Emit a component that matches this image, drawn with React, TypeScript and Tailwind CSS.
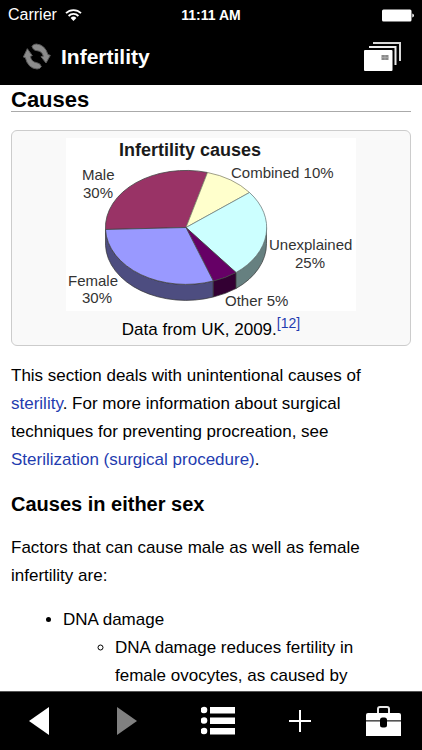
import { useState } from "react";

const RefreshIcon = () => (
    <svg width="28" height="28" viewBox="0 0 84 84" aria-hidden="true">
        <g fill="#8c8c8c" stroke="#5c5c5c" strokeWidth="3" strokeLinejoin="round">
            <path d="M27 10 Q31 3 40 3 Q66 5 75 35 L82 37 L69 60 L54 41 L61 40 Q57 24 42 23 Q31 23 27 10 Z" />
            <path d="M55 71 Q51 78 42 78 Q15 76 7 44 L1 42 L13 17 L28 38 L22 40 Q25 57 41 59 Q52 60 55 71 Z" />
        </g>
    </svg>
)

const CardsIcon = () => (
    <svg width="37" height="29" viewBox="0 0 37 29" aria-hidden="true">
        <path d="M9 1 H36 V19" fill="none" stroke="#d8d8d8" strokeWidth="2" />
        <path d="M5 5 H31.500 V23" fill="none" stroke="#ececec" strokeWidth="2" />
        <rect x="0" y="8" width="28.500" height="21" rx="1" fill="#fff" />
        <rect x="17.500" y="13" width="7" height="5" fill="#8a8a8a" />
        <path d="M17.500 15.500 H24.500 M21 13 V18" stroke="#b5b5b5" strokeWidth="0.600" />
    </svg>
)

const WifiIcon = () => (
    <svg width="17" height="12" viewBox="0 0 17 12" aria-hidden="true">
        <g fill="none" stroke="#fff" strokeWidth="1.800">
            <path d="M1 4.200 A10.600 10.600 0 0 1 16 4.200" />
            <path d="M3.600 7 A6.900 6.900 0 0 1 13.400 7" />
        </g>
        <path d="M8.500 12 L5.600 9 A4.100 4.100 0 0 1 11.400 9 Z" fill="#fff" />
    </svg>
)

const BatteryIcon = () => (
    <svg width="32" height="13" viewBox="0 0 32 13" aria-hidden="true">
        <rect x="0" y="0.500" width="29.500" height="12" rx="1.500" fill="#fff" />
        <path d="M30.300 4.600 Q32 5 32 6.500 Q32 8 30.300 8.400 Z" fill="#fff" />
    </svg>
)

const ListIcon = () => (
    <svg width="34" height="30" viewBox="0 0 34 30" fill="#fff" aria-hidden="true">
        <circle cx="3" cy="4" r="3.300" />
        <circle cx="3" cy="14.500" r="3.300" />
        <circle cx="3" cy="25" r="3.300" />
        <rect x="9" y="1" width="25" height="6.500" />
        <rect x="9" y="11.500" width="25" height="6.500" />
        <rect x="9" y="22" width="25" height="6.500" />
    </svg>
)

const PlusIcon = () => (
    <svg width="24" height="24" viewBox="0 0 24 24" aria-hidden="true">
        <path d="M12 1 V23 M1 12 H23" stroke="#fff" strokeWidth="2" />
    </svg>
)

const BriefcaseIcon = () => (
    <svg width="35" height="30" viewBox="0 0 35 30" aria-hidden="true">
        <path d="M12 7 V3 Q12 1 14 1 H21 Q23 1 23 3 V7" fill="none" stroke="#e8e8e8" strokeWidth="2" />
        <path d="M0 14 V9 Q0 7 2 7 H33 Q35 7 35 9 V14 Z" fill="#fff" />
        <rect x="0" y="14" width="35" height="1.500" fill="#555" />
        <rect x="0" y="15.500" width="35" height="14.500" fill="#fff" />
        <rect x="14" y="11.500" width="7" height="10" rx="2.500" fill="#000" />
    </svg>
)

const Triangle = ({ points, color }: { points: string, color: string }) => (
    <svg width="20" height="28" viewBox="0 0 20 28" aria-hidden="true">
        <polygon points={points} fill={color} />
    </svg>
)

const PieChart = () => (
    <svg viewBox="0 0 290 173" className="w-full max-w-[290px] bg-white" role="img" aria-label="Infertility causes">
        {/* sides */}
        <g stroke="#333" strokeWidth="0.700" strokeLinejoin="round">
            <path d="M39.500 91.500 A80.500 57 0 0 0 147.300 143 V159 A80.500 57 0 0 1 39.500 107.500 Z" fill="#4d4d80" />
            <path d="M147.300 143 A80.500 57 0 0 0 170 134.500 V150.500 A80.500 57 0 0 1 147.300 159 Z" fill="#330033" />
            <path d="M170 134.500 A80.500 57 0 0 0 200.500 89.500 V105.500 A80.500 57 0 0 1 170 150.500 Z" fill="#668080" />
        </g>
        {/* top */}
        <g stroke="#444" strokeWidth="0.800" strokeLinejoin="round">
            <path d="M120 89.500 L39.500 91.500 A80.500 57 0 0 1 141.500 34.500 Z" fill="#993366" />
            <path d="M120 89.500 L141.500 34.500 A80.500 57 0 0 1 183.500 54.500 Z" fill="#ffffcc" stroke="#888870" />
            <path d="M120 89.500 L183.500 54.500 A80.500 57 0 0 1 170 134.500 Z" fill="#ccffff" stroke="#708080" />
            <path d="M120 89.500 L170 134.500 A80.500 57 0 0 1 147.300 143 Z" fill="#660066" />
            <path d="M120 89.500 L147.300 143 A80.500 57 0 0 1 39.500 91.500 Z" fill="#9999ff" />
        </g>
        <text x="53" y="18" fontSize="18" fontWeight="bold" fill="#1a1a1a">Infertility causes</text>
        <g fontSize="15" fill="#333">
            <text x="16" y="42">Male</text>
            <text x="17" y="60">30%</text>
            <text x="165" y="40">Combined 10%</text>
            <text x="203" y="112">Unexplained</text>
            <text x="229" y="130">25%</text>
            <text x="2" y="148">Female</text>
            <text x="16" y="165">30%</text>
            <text x="159" y="168">Other 5%</text>
        </g>
    </svg>
)

export default function App() {

    const [page, setPage] = useState(1)

    return (

        <div className="flex h-screen flex-col bg-white font-['Liberation_Sans',Arial,sans-serif] text-[17px] leading-7 text-black">

            <header className="shrink-0 bg-black text-white">
                <div className="grid h-[30px] grid-cols-3 items-center px-2">
                    <div className="flex items-center gap-2 text-[16px]">
                        <span>Carrier</span>
                        <WifiIcon />
                    </div>
                    <span className="text-center text-[14px] font-bold">11:11 AM</span>
                    <div className="flex justify-end">
                        <BatteryIcon />
                    </div>
                </div>
                <div className="flex h-[55px] items-center pr-[21px] pb-[2px] pl-[23px]">
                    <button type="button" aria-label="Refresh" className="cursor-pointer">
                        <RefreshIcon />
                    </button>
                    <h1 className="ml-[10px] flex-1 text-[21px] font-bold">Infertility</h1>
                    <button type="button" aria-label="Open pages" className="cursor-pointer">
                        <CardsIcon />
                    </button>
                </div>
            </header>

            <main className="min-h-0 flex-1 overflow-hidden px-[11px]">

                <h2 className="border-b border-[#aaa] pt-[4px] text-[22px] leading-[22px] font-bold">Causes</h2>

                <figure className="mt-[18px] flex flex-col items-center rounded-md border border-[#ccc] bg-[#f9f9f9] pt-[7px]">
                    <PieChart />
                    <figcaption className="pt-[5px] pb-px">
                        Data from UK, 2009.<sup className="text-[14px] leading-none"><a href="#cite-12" className="text-[#1f3cb0]">[12]</a></sup>
                    </figcaption>
                </figure>

                <p className="mt-4">
                    This section deals with unintentional causes of{" "}
                    <a href="#sterility" className="text-[#1f3cb0]">sterility</a>. For more information about surgical
                    techniques for preventing procreation, see{" "}
                    <a href="#sterilization" className="text-[#1f3cb0]">Sterilization (surgical procedure)</a>.
                </p>

                <h3 className="mt-4 text-[20px] font-bold">Causes in either sex</h3>

                <p className="mt-4">Factors that can cause male as well as female infertility are:</p>

                <ul className="mt-4 list-disc pr-3 pl-[52px]">
                    <li>
                        DNA damage
                        <ul className="list-[circle] pl-[52px]">
                            <li>DNA damage reduces fertility in female ovocytes, as caused by</li>
                        </ul>
                    </li>
                </ul>

            </main>

            <nav className="flex h-[59px] shrink-0 items-center justify-between border-t border-[#555] bg-black pr-[13px] pl-[17px]">
                <button type="button" aria-label="Back" onClick={() => setPage(page - 1)} className="flex w-11 cursor-pointer justify-center">
                    <Triangle points="0,14 20,0 20,28" color="#fff" />
                </button>
                <button type="button" aria-label="Forward" disabled={page >= 1} onClick={() => setPage(page + 1)} className="flex w-11 justify-center">
                    <Triangle points="20,14 0,0 0,28" color="#808080" />
                </button>
                <button type="button" aria-label="Contents" className="flex w-[50px] cursor-pointer justify-center">
                    <ListIcon />
                </button>
                <button type="button" aria-label="Add" className="flex w-[26px] cursor-pointer justify-center">
                    <PlusIcon />
                </button>
                <button type="button" aria-label="Tools" className="flex w-[52px] cursor-pointer justify-center">
                    <BriefcaseIcon />
                </button>
            </nav>

        </div>

    )

}
